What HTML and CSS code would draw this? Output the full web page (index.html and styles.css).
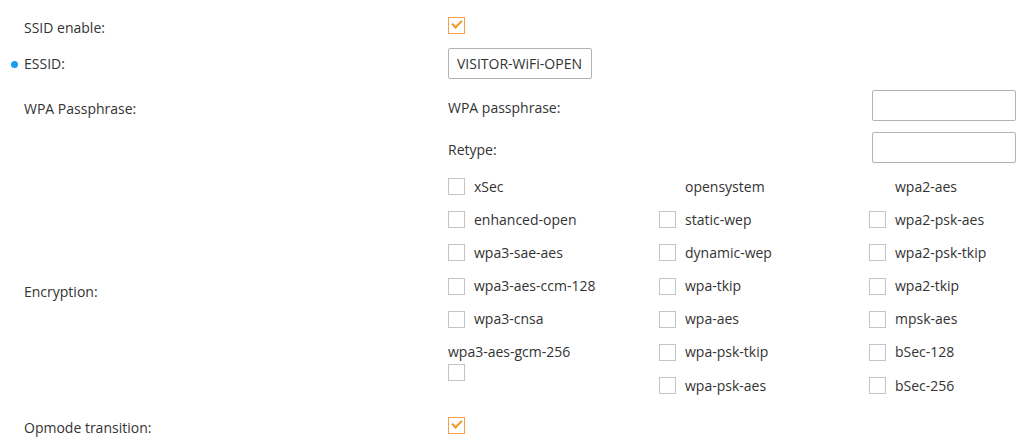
FILE: index.html
```html
<!DOCTYPE html>
<html lang="en">
<head>
    <meta charset="UTF-8">
    <title>SSID profile</title>
    <link rel="stylesheet" href="styles.css">
</head>
<body>
    <div class="form">
        <div class="row row-ssid">
            <div class="label">SSID enable:</div>
            <div class="value"><span class="check checked"></span></div>
        </div>

        <div class="row row-essid">
            <div class="label required">ESSID:</div>
            <div class="value"><input class="text essid" type="text" value="VISITOR-WiFi-OPEN"></div>
        </div>

        <div class="row row-wpa">
            <div class="label">WPA Passphrase:</div>
            <div class="value">
                <div class="pass-line">
                    <span>WPA passphrase:</span>
                    <input class="text pass" type="password">
                </div>
                <div class="pass-line">
                    <span>Retype:</span>
                    <input class="text pass" type="password">
                </div>
            </div>
        </div>

        <div class="row row-enc">
            <div class="label">Encryption:</div>
            <div class="value enc-grid">
                <div class="opt"><span class="check"></span>xSec</div>
                <div class="opt"><span class="no-check"></span>opensystem</div>
                <div class="opt"><span class="no-check"></span>wpa2-aes</div>

                <div class="opt"><span class="check"></span>enhanced-open</div>
                <div class="opt"><span class="check"></span>static-wep</div>
                <div class="opt"><span class="check"></span>wpa2-psk-aes</div>

                <div class="opt"><span class="check"></span>wpa3-sae-aes</div>
                <div class="opt"><span class="check"></span>dynamic-wep</div>
                <div class="opt"><span class="check"></span>wpa2-psk-tkip</div>

                <div class="opt"><span class="check"></span>wpa3-aes-ccm-128</div>
                <div class="opt"><span class="check"></span>wpa-tkip</div>
                <div class="opt"><span class="check"></span>wpa2-tkip</div>

                <div class="opt"><span class="check"></span>wpa3-cnsa</div>
                <div class="opt"><span class="check"></span>wpa-aes</div>
                <div class="opt"><span class="check"></span>mpsk-aes</div>

                <div class="opt stacked">wpa3-aes-gcm-256<span class="check"></span></div>
                <div class="opt"><span class="check"></span>wpa-psk-tkip</div>
                <div class="opt"><span class="check"></span>bSec-128</div>

                <div class="opt"></div>
                <div class="opt"><span class="check"></span>wpa-psk-aes</div>
                <div class="opt"><span class="check"></span>bSec-256</div>
            </div>
        </div>

        <div class="row row-opmode">
            <div class="label">Opmode transition:</div>
            <div class="value"><span class="check checked"></span></div>
        </div>
    </div>
</body>
</html>
```

FILE: styles.css
```css
body {
    margin: 0;
    background-color: #fff;
    font-family: "Open Sans", Arial, sans-serif;
    font-size: 14px;
    color: #333;
}

.form {
    padding: 10px 12px 0 24px;
}

.row {
    display: flex;
}

.label {
    width: 424px;
    flex-shrink: 0;
    position: relative;
}

/* синяя точка у обязательного поля */
.label.required::before {
    content: "";
    position: absolute;
    left: -13px;
    top: 7px;
    width: 7px;
    height: 7px;
    border-radius: 50%;
    background-color: #1a9fe8;
}

.value {
    flex: 1;
}

.row-ssid {
    height: 34px;
    align-items: center;
}

.row-essid {
    margin-top: 4px;
    height: 31px;
    align-items: center;
}

.row-wpa {
    margin-top: 11px;
}

.row-wpa .label {
    padding-top: 9px;
}

.pass-line {
    display: flex;
    justify-content: space-between;
    align-items: center;
    height: 31px;
    margin-bottom: 11px;
}

.pass-line span {
    padding-top: 4px;
}

.text {
    box-sizing: border-box;
    height: 31px;
    border: 1px solid #b3b3b3;
    border-radius: 2px;
    font-family: "Open Sans", Arial, sans-serif;
    font-size: 14px;
    color: #333;
    padding: 0 8px;
    outline: none;
}

.essid {
    width: 144px;
}

.pass {
    width: 144px;
}

.row-enc {
    margin-top: -4px;
    align-items: center;
}

.row-enc .label {
    padding-top: 10px;
}

.enc-grid {
    display: grid;
    grid-template-columns: 211px 210px 1fr;
    grid-auto-rows: 33px;
    row-gap: 0.2px;
}

.opt {
    display: flex;
    align-items: center;
    line-height: 18px;
}

.opt.stacked {
    flex-direction: column;
    align-items: flex-start;
    justify-content: flex-start;
    padding-top: 7px;
}

.opt.stacked .check {
    margin-top: 3px;
}

.check {
    display: inline-block;
    box-sizing: border-box;
    width: 17px;
    height: 17px;
    border: 1px solid #c4c4c4;
    margin-right: 9px;
    flex-shrink: 0;
    position: relative;
}

.no-check {
    display: inline-block;
    width: 26px;
    flex-shrink: 0;
}

.check.checked {
    border-color: #f6a04d;
}

.check.checked::after {
    content: "";
    position: absolute;
    left: 3px;
    top: 2px;
    width: 8px;
    height: 4px;
    border-left: 2px solid #f7941d;
    border-bottom: 2px solid #f7941d;
    transform: rotate(-45deg);
}

.row-opmode {
    margin-top: 7px;
    height: 36px;
    align-items: center;
}
```
